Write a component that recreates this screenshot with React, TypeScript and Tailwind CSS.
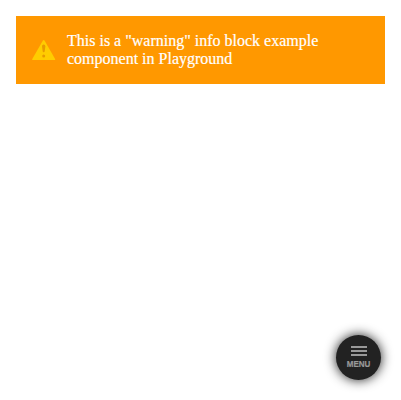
export default function App() {
  return (
    <div className="flex h-[400px] flex-col justify-between bg-white p-4">
      <div className="flex h-[68px] items-center bg-[#ff9800] px-4 font-['Liberation_Serif',serif] text-[16px] leading-[18px] text-white [-webkit-text-stroke:0.2px_white]">
        <svg className="mr-[11px] h-6 w-6 shrink-0" viewBox="0 0 24 24" fill="none">
          <path d="M10.9 2.5Q11.7 1.4 12.5 2.5L23.1 21Q23.5 22 22.5 22H.9Q-.1 22 .3 21Z" fill="#ffcc00" />
          <path d="M10 8.2a1.7 1.7 0 0 1 3.4 0L12.7 13.2a1 1 0 0 1-2 0Z" fill="#e89b00" />
          <circle cx="11.7" cy="18" r="1.5" fill="#e89b00" />
        </svg>
        <p>This is a "warning" info block example component in Playground</p>
      </div>
      <button className="mr-1 mb-1 flex h-[45px] w-[45px] flex-col items-center self-end rounded-full bg-[#222] pt-[11px] font-['Liberation_Sans',sans-serif] text-[8px] font-bold text-[#999] shadow-[0_0_12px_rgba(0,0,0,0.9)] [-webkit-text-stroke:0.2px_#999]">
        <svg className="h-[10px] w-4" viewBox="0 0 16 10" fill="#999" shapeRendering="crispEdges">
          <path d="M0 0h16v2H0zM0 4h16v2H0zM0 8h16v2H0z" />
        </svg>
        <span className="mt-[4px] origin-top scale-y-110 leading-[8px]">MENU</span>
      </button>
    </div>
  );
}
